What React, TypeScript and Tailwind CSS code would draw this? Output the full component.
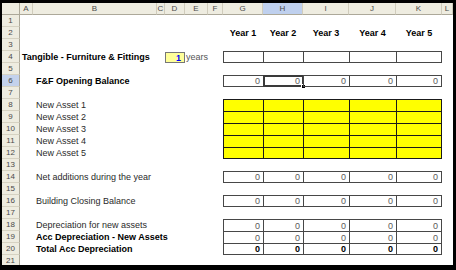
import React from "react";

const colW = [
  "w-[13px]",
  "w-[124px]",
  "w-[8px]",
  "w-[20px]",
  "w-[23px]",
  "w-[15px]",
  "w-[40px]",
  "w-[40px]",
  "w-[46px]",
  "w-[47px]",
  "w-[46px]",
  "w-[11px]",
];
const letters = ["A", "B", "C", "D", "E", "F", "G", "H", "I", "J", "K", "L"];

type Box = "none" | "white" | "yellow";
type Row = {
  label?: string;
  labelCol?: "A" | "B";
  bold?: boolean;
  box?: Box;
  top?: boolean;
  bottom?: boolean;
  values?: string;
  boldValues?: boolean;
  years?: boolean;
  tangible?: boolean;
};

const rows: Row[] = [
  {},
  { years: true },
  {},
  { label: "Tangible - Furniture & Fittings", labelCol: "A", bold: true, box: "white", top: true, bottom: true, tangible: true },
  {},
  { label: "F&F Opening Balance", labelCol: "B", bold: true, box: "white", top: true, bottom: true, values: "0" },
  {},
  { label: "New Asset 1", labelCol: "B", box: "yellow", top: true },
  { label: "New Asset 2", labelCol: "B", box: "yellow", top: true },
  { label: "New Asset 3", labelCol: "B", box: "yellow", top: true },
  { label: "New Asset 4", labelCol: "B", box: "yellow", top: true },
  { label: "New Asset 5", labelCol: "B", box: "yellow", top: true, bottom: true },
  {},
  { label: "Net additions during the year", labelCol: "B", box: "white", top: true, bottom: true, values: "0" },
  {},
  { label: "Building Closing Balance", labelCol: "B", box: "white", top: true, bottom: true, values: "0" },
  {},
  { label: "Depreciation for new assets", labelCol: "B", box: "white", top: true, values: "0" },
  { label: "Acc Depreciation - New Assets", labelCol: "B", bold: true, box: "white", top: true, values: "0" },
  { label: "Total Acc Depreciation", labelCol: "B", bold: true, box: "white", top: true, bottom: true, values: "0", boldValues: true },
  {},
];

function DataCell({ row, ci, rowIdx }: { row: Row; ci: number; rowIdx: number }) {
  const w = colW[ci];
  const isYellow = row.box === "yellow";
  const border = isYellow ? "border-[#1a1a1a]" : "border-[#474747]";
  const bg = isYellow ? "bg-[#FFFF00]" : "";
  const last = ci === 10;
  const cls = [
    w,
    "shrink-0 h-full relative flex items-center justify-end pr-[3px] border-l",
    border,
    bg,
    row.top ? "border-t" : "",
    row.bottom ? "border-b" : "",
    last ? "border-r" : "",
    row.boldValues ? "font-bold text-black" : "text-[#5a5a5a]",
  ].join(" ");
  const selected = rowIdx === 6 && ci === 7;
  return (
    <div className={cls}>
      {row.values}
      {selected && (
        <>
          <div className="absolute top-[-1px] left-[-1px] right-[-1px] bottom-[-1px] border-2 border-[#3a3a3a]" />
          <div className="absolute bottom-[-3px] right-[-3px] w-[5px] h-[5px] bg-black border border-white" />
        </>
      )}
    </div>
  );
}

function SheetRow({ row, idx }: { row: Row; idx: number }) {
  const n = idx + 1;
  const rowHeaderSel = n === 6;
  return (
    <div className="flex h-[12px] shrink-0">
      <div
        className={`w-[18px] shrink-0 h-full flex items-center justify-center text-[8px] text-[#4a4a4a] border-b border-r border-b-[#D6D2C2] border-r-[#ACA899] ${
          rowHeaderSel ? "bg-[#C4D2EC]" : "bg-[#EEECE0]"
        }`}
      >
        {n}
      </div>
      {letters.map((L, ci) => {
        const w = colW[ci];
        if (ci >= 6 && ci <= 10 && row.box && row.box !== "none") {
          return <DataCell key={L} row={row} ci={ci} rowIdx={n} />;
        }
        if (ci >= 6 && ci <= 10 && row.years) {
          return (
            <div key={L} className={`${w} shrink-0 h-full flex items-center justify-center font-bold text-black`}>
              Year {ci - 5}
            </div>
          );
        }
        if (L === row.labelCol && row.label) {
          return (
            <div
              key={L}
              className={`${w} shrink-0 h-full flex items-center whitespace-nowrap overflow-visible ${
                L === "A" ? "pl-[2px]" : "pl-[3px]"
              } ${row.bold ? "font-bold text-black" : "text-[#2a2a2a]"}`}
            >
              {row.label}
            </div>
          );
        }
        if (row.tangible && L === "D") {
          return (
            <div key={L} className={`${w} shrink-0 h-full pt-px`}>
              <div className="h-[11px] bg-[#FFFF99] border border-[#777777] flex items-center justify-end pr-[3px] font-bold text-[#0000FF]">
                1
              </div>
            </div>
          );
        }
        if (row.tangible && L === "E") {
          return (
            <div key={L} className={`${w} shrink-0 h-full flex items-center whitespace-nowrap pl-px text-[#555555]`}>
              years
            </div>
          );
        }
        return <div key={L} className={`${w} shrink-0 h-full`} />;
      })}
    </div>
  );
}

export default function App() {
  return (
    <div className="w-[456px] h-[270px] bg-black overflow-hidden pt-[3px] pl-[2px]">
      <div
        className="w-[451px] h-[262px] bg-white overflow-hidden flex flex-col text-[9px] leading-[12px]"
        style={{ fontFamily: '"Liberation Sans", Arial, sans-serif' }}
      >
        <div className="flex h-[12px] shrink-0">
          <div className="w-[18px] shrink-0 h-full bg-[#EEECE0] border-b border-r border-[#ACA899]" />
          {letters.map((L, ci) => (
            <div
              key={L}
              className={`${colW[ci]} shrink-0 h-full flex items-center justify-center text-[8px] text-[#4a4a4a] border-b border-r border-b-[#ACA899] border-r-[#D0CCBC] ${
                L === "H" ? "bg-[#BFD0EE]" : "bg-[#EEECE0]"
              }`}
            >
              {L}
            </div>
          ))}
        </div>
        {rows.map((r, i) => (
          <SheetRow key={i} row={r} idx={i} />
        ))}
      </div>
    </div>
  );
}
